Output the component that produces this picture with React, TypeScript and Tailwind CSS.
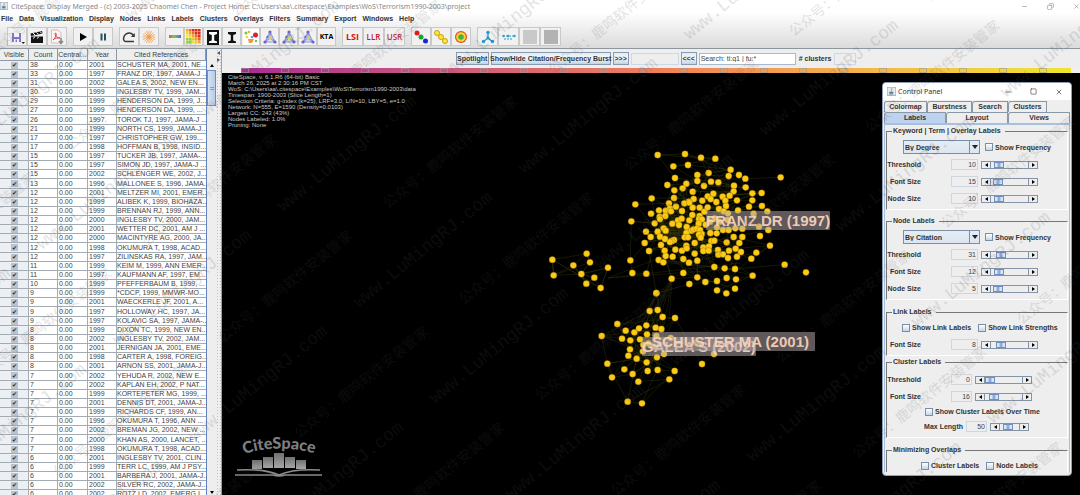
import { useId } from "react";
import type { ReactNode } from "react";
import { clsx } from "clsx";
import { Copy, Minus, Square, X } from "lucide-react";

type Point = [number, number];

const MENUS = [
  "File", "Data", "Visualization", "Display", "Nodes", "Links", "Labels",
  "Clusters", "Overlays", "Filters", "Summary", "Export", "Windows", "Help",
];

/* count, year, reference */
const REFERENCES: [number, number, string][] = [
  [38, 2001, "SCHUSTER MA, 2001, NE..."],
  [33, 1997, "FRANZ DR, 1997, JAMA-J ..."],
  [31, 2002, "GALEA S, 2002, NEW EN..."],
  [30, 1999, "INGLESBY TV, 1999, JAM..."],
  [29, 1999, "HENDERSON DA, 1999, J..."],
  [27, 1999, "HENDERSON DA, 1999, ..."],
  [26, 1997, "TOROK TJ, 1997, JAMA-J ..."],
  [21, 1999, "NORTH CS, 1999, JAMA-J..."],
  [17, 1997, "CHRISTOPHER GW, 199..."],
  [17, 1998, "HOFFMAN B, 1998, INSID..."],
  [15, 1997, "TUCKER JB, 1997, JAMA-..."],
  [15, 1997, "SIMON JD, 1997, JAMA-J ..."],
  [15, 2002, "SCHLENGER WE, 2002, J..."],
  [13, 1996, "MALLONEE S, 1996, JAMA..."],
  [12, 2001, "MELTZER MI, 2001, EMER..."],
  [12, 1999, "ALIBEK K, 1999, BIOHAZA..."],
  [12, 1999, "BRENNAN RJ, 1999, ANN..."],
  [12, 2000, "INGLESBY TV, 2000, JAM..."],
  [12, 2001, "WETTER DC, 2001, AM J ..."],
  [12, 2000, "MACINTYRE AG, 2000, JA..."],
  [12, 1998, "OKUMURA T, 1998, ACAD..."],
  [12, 1997, "ZILINSKAS RA, 1997, JAM..."],
  [11, 1999, "KEIM M, 1999, ANN EMER..."],
  [11, 1997, "KAUFMANN AF, 1997, EM..."],
  [10, 1999, "PFEFFERBAUM B, 1999, ..."],
  [9, 1999, "*CDCP, 1999, MMWR-MO..."],
  [9, 2001, "WAECKERLE JF, 2001, A..."],
  [9, 1997, "HOLLOWAY HC, 1997, JA..."],
  [9, 1997, "KOLAVIC SA, 1997, JAMA-..."],
  [8, 1999, "DIXON TC, 1999, NEW EN..."],
  [8, 2002, "INGLESBY TV, 2002, JAM..."],
  [8, 2001, "JERNIGAN JA, 2001, EME..."],
  [8, 1998, "CARTER A, 1998, FOREIG..."],
  [8, 2001, "ARNON SS, 2001, JAMA-J..."],
  [7, 2002, "YEHUDA R, 2002, NEW E..."],
  [7, 2002, "KAPLAN EH, 2002, P NAT..."],
  [7, 1999, "KORTEPETER MG, 1999, ..."],
  [7, 2001, "DENNIS DT, 2001, JAMA-J..."],
  [7, 1999, "RICHARDS CF, 1999, AN..."],
  [7, 1996, "OKUMURA T, 1996, ANN ..."],
  [7, 2002, "BREMAN JG, 2002, NEW ..."],
  [7, 2000, "KHAN AS, 2000, LANCET, ..."],
  [7, 1998, "OKUMURA T, 1998, ACAD..."],
  [6, 2001, "INGLESBY TV, 2001, CLIN..."],
  [6, 1999, "TERR LC, 1999, AM J PSY..."],
  [6, 2001, "BARBERA J, 2001, JAMA-J..."],
  [6, 2002, "SILVER RC, 2002, JAMA-J..."],
  [6, 2002, "ROTZ LD, 2002, EMERG I..."],
];

const RUN_INFO = [
  "CiteSpace, v. 6.1.R6 (64-bit) Basic",
  "March 26, 2025 at 2:30:16 PM CST",
  "WoS: C:\\Users\\aa\\.citespace\\Examples\\WoS\\Terrorism1990-2003\\data",
  "Timespan: 1900-2003 (Slice Length=1)",
  "Selection Criteria: g-index (k=25), LRF=3.0, L/N=10, LBY=5, e=1.0",
  "Network: N=555, E=1590 (Density=0.0103)",
  "Largest CC: 243 (43%)",
  "Nodes Labeled: 1.0%",
  "Pruning: None",
];

/* Node clusters, each on its own grid of three units per pixel. */
const CORE: Point[] = [
  [113, 15], [195, 12], [243, 23], [286, 26], [160, 49], [204, 45], [332, 59], [266, 69],
  [232, 75], [326, 78], [357, 75], [165, 84], [232, 93], [376, 86], [482, 82], [142, 105],
  [199, 101], [273, 95], [295, 97], [342, 107], [252, 108], [377, 112], [163, 121], [188, 115],
  [218, 125], [341, 124], [280, 131], [329, 137], [397, 130], [425, 129], [263, 139], [308, 140],
  [95, 145], [162, 144], [247, 152], [221, 147], [272, 147], [316, 152], [351, 151], [397, 151],
  [46, 163], [147, 160], [207, 155], [193, 160], [289, 156], [318, 168], [168, 170], [218, 173],
  [239, 173], [387, 170], [426, 168], [150, 175], [208, 158], [253, 185], [263, 172], [297, 177],
  [311, 184], [324, 190], [354, 181], [93, 191], [117, 181], [137, 182], [153, 184], [186, 183],
  [401, 191], [442, 184], [119, 200], [136, 198], [217, 195], [239, 198], [120, 207], [104, 220],
  [34, 214], [157, 221], [174, 211], [185, 206], [208, 211], [237, 207], [177, 225], [246, 208],
  [236, 221], [257, 224], [200, 231], [270, 215], [284, 205], [299, 215], [323, 210], [78, 245],
  [113, 245], [131, 235], [137, 242], [92, 261], [120, 260], [214, 242], [221, 238], [231, 236],
  [240, 240], [245, 252], [237, 254], [199, 249], [271, 249], [291, 232], [309, 240], [326, 240],
  [290, 250], [346, 235], [367, 236], [417, 230], [445, 240], [420, 258], [74, 279], [135, 267],
  [162, 270], [156, 273], [194, 262], [204, 262], [242, 263], [224, 279], [274, 273], [283, 272],
  [320, 277], [341, 261], [367, 261], [358, 279], [150, 276], [87, 303], [123, 285], [134, 302],
  [166, 299], [186, 302], [199, 287], [200, 295], [250, 292], [267, 289], [250, 303], [266, 302],
  [294, 300], [295, 314], [327, 302], [347, 296], [363, 306], [309, 313], [324, 324], [351, 320],
  [409, 308], [394, 326], [450, 287], [116, 330], [130, 337], [137, 318], [158, 320], [190, 327],
  [207, 338], [232, 332], [224, 311], [31, 331], [37, 369], [79, 371], [283, 351], [314, 355],
  [345, 357], [494, 344], [190, 369], [155, 386], [232, 382], [208, 402], [256, 396], [291, 393],
  [320, 384], [348, 388], [398, 377], [291, 421], [319, 430], [345, 416], [109, 430], [558, 367],
];

const WEST: Point[] = [
  [37, 359], [41, 406], [100, 376], [140, 341], [150, 367], [124, 402], [163, 413], [139, 431],
  [204, 383], [182, 444],
];

const SOUTH: Point[] = [
  [229, 39], [209, 93], [233, 90], [248, 111], [285, 114], [112, 132], [137, 152], [163, 157],
  [177, 145], [199, 136], [227, 143], [244, 147], [65, 168], [126, 176], [151, 181], [180, 178],
  [201, 163], [229, 168], [150, 208], [145, 227], [189, 214], [170, 236], [200, 247], [231, 232],
  [252, 222], [190, 195], [205, 190], [220, 200], [272, 174], [348, 188], [402, 222], [366, 252],
  [82, 251], [96, 292], [133, 268], [158, 282], [175, 305], [203, 273], [233, 270], [284, 273],
  [268, 298], [143, 365], [186, 370],
];

function Cluster({ nodes, transform }: { nodes: Point[]; transform: string }) {
  const hub = Math.floor(nodes.length / 2);
  return (
    <g transform={transform}>
      <g stroke="#9a9f1c" strokeWidth={1.5} opacity={0.3}>
        {nodes.map(([x, y], i) =>
          [i + 1, (i * 7 + 3) % nodes.length, i % 3 ? hub : (i + 11) % nodes.length].map((n, k) => {
            const to = nodes[n % nodes.length];
            const near = Math.hypot(to[0] - x, to[1] - y) < 190;
            return near && <line key={`${i}-${k}`} x1={x} y1={y} x2={to[0]} y2={to[1]} />;
          }),
        )}
      </g>
      {nodes.map(([x, y], i) => (
        <circle key={i} cx={x} cy={y} r={9.5} fill="#fecb14" stroke="#7a5f08" strokeWidth={1} />
      ))}
    </g>
  );
}

function NodeLabel({ x, y, width, text }: { x: number; y: number; width: number; text: string }) {
  return (
    <g>
      <rect x={x} y={y} width={width} height={19} rx={1} fill="#b7abae" opacity={0.52} />
      <text x={x} y={y + 15} fontSize={15} fontWeight={700} fill="#f8d4bb" opacity={0.93}>
        {text}
      </text>
    </g>
  );
}

/* The merged network; it opens on the top left corner of the canvas. */
function Network() {
  return (
    <svg className="absolute top-0 left-0 h-full w-full font-['Liberation_Sans',sans-serif]">
      <g stroke="#8a8f16" strokeWidth={0.5} opacity={0.3}>
        {[415, 420, 425, 428, 434, 440, 447].map((x, i) => (
          <line key={x} x1={450} y1={206} x2={x} y2={248 + (i % 3) * 8} />
        ))}
        <line x1={386} y1={205} x2={518} y2={190} />
        <line x1={386} y1={205} x2={512} y2={196} />
        <line x1={386} y1={205} x2={450} y2={180} />
      </g>
      <Cluster nodes={WEST} transform="translate(318 67) scale(0.3333)" />
      <Cluster nodes={CORE} transform="translate(398 77) scale(0.3333)" />
      <Cluster nodes={SOUTH} transform="translate(358 207) scale(0.3333)" />
      <NodeLabel x={484} y={138} width={124} text="FRANZ DR (1997)" />
      <NodeLabel x={420} y={264} width={114} text="GALEA S (2002)" />
      <NodeLabel x={430} y={259} width={163} text="SCHUSTER MA (2001)" />
    </svg>
  );
}

function CiteSpaceLogo() {
  return (
    <svg viewBox="0 0 88 40" className="absolute bottom-[18px] left-[13px] h-[40px] w-[88px]">
      <defs>
        <path id="logo-arc" d="M9 17 Q44 6 82 17" />
        <linearGradient id="logo-bar" x1="0" y1="0" x2="0" y2="1">
          <stop offset="0" stopColor="#707070" />
          <stop offset="1" stopColor="#a6a6a6" />
        </linearGradient>
      </defs>
      <text fontSize={16} fontWeight={900} fill="#7f7f7f" className="font-['Lato',sans-serif]">
        <textPath href="#logo-arc">CiteSpace</textPath>
      </text>
      <g fill="url(#logo-bar)">
        <rect x={17} y={23} width={10} height={9} />
        <rect x={28} y={20} width={10} height={11} />
        <rect x={39} y={16} width={10} height={15} />
        <rect x={50} y={20} width={10} height={11} />
        <rect x={61} y={23} width={10} height={9} />
      </g>
      <path
        d="M2 33 C20 32 35 34 44 38 C53 34 68 32 85 33 M0 38 H38 Q44 40 50 38 H87"
        fill="none"
        stroke="#8b8b8b"
        strokeWidth={1.6}
      />
    </svg>
  );
}

/* Diagonal site mark repeated over the whole window. */
function Watermark() {
  const marks: Point[] = [];
  for (let i = -6; i < 8; i++) {
    for (let j = -2; j < 5; j++) {
      const x = 283 + 76 * i + 241 * j;
      const y = 212 + 96 * i - 38 * j;
      if (x > -240 && x < 1080 && y > 0 && y < 605) marks.push([x, y]);
    }
  }
  return (
    <svg
      aria-hidden="true"
      className="pointer-events-none absolute inset-0 h-full w-full"
      fill="#505050"
      opacity={0.15}
    >
      {marks.map(([x, y]) => (
        <g key={`${x}-${y}`}>
          <text
            transform={`translate(${x} ${y}) rotate(-39)`}
            fontSize={18}
            className="font-['Liberation_Mono',monospace]"
          >
            www.LuMingRJ.com
          </text>
          <text
            transform={`translate(${x + 105} ${y - 3}) rotate(-39)`}
            fontSize={14}
            className="font-['Noto_Sans_CJK_SC',sans-serif]"
          >
            公众号：鹿鸣软件安装管家
          </text>
        </g>
      ))}
    </svg>
  );
}

function JavaIcon({ className }: { className?: string }) {
  return (
    <svg viewBox="0 0 16 16" className={className}>
      <rect x={0.5} y={0.5} width={15} height={15} fill="#e4ebf1" stroke="#8fa3b5" />
      <path d="M8 2 C11 4 6 5 8 8" fill="none" stroke="#e76f00" strokeWidth={1.5} />
      <path d="M4 9 H11 L10 12 H5 Z M3 14 H12" fill="#5382a1" stroke="#5382a1" />
    </svg>
  );
}

function TriangleIcon({ fill }: { fill: string }) {
  return (
    <svg viewBox="0 0 16 16" className="size-4">
      <path d="M8 3 L3 13 H13 Z M8 3 V9 L3 13 M8 9 L13 13" fill={fill} stroke="#8f9ad8" strokeWidth={1.2} />
      <g fill="#6d63c9">
        <circle cx={8} cy={3} r={1.6} />
        <circle cx={3} cy={13} r={1.6} />
        <circle cx={13} cy={13} r={1.6} />
        <circle cx={5.5} cy={8} r={1.2} />
      </g>
      <circle cx={8.5} cy={9} r={1.6} fill="#e2d23c" />
    </svg>
  );
}

function IBeam({ color }: { color: string }) {
  return <path d="M4 3 H12 V5 L9.200 6 V11.500 L12 12.500 V14 H4 V12.500 L6.800 11.500 V6 L4 5 Z" fill={color} />;
}

const HEAT = ["#f6ef3a", "#f7d52e", "#f5a623", "#ee6a1f", "#dd2b1c"];

const TOOL_GROUPS: { itemWidth: string; tools: { name: string; icon: ReactNode }[] }[] = [
  {
    itemWidth: "w-5",
    tools: [
      {
        name: "Save",
        icon: (
          <svg viewBox="0 0 16 16" className="size-4">
            <path d="M3 4 H12 V13 H3 Z" fill="#8377c4" />
            <path d="M5 4 H10 V8 H5 Z M5 10 H10 V13 H5 Z" fill="#f4f2ff" />
            <path d="M6.5 10.500 H8 V13 H6.500 Z" fill="#8377c4" />
            <path d="M12.500 13 H16 L14.200 15 Z" fill="#222" />
          </svg>
        ),
      },
      {
        name: "Movie",
        icon: (
          <svg viewBox="0 0 16 16" className="size-4">
            <path d="M2 7.500 H14 V14 H2 Z M1.500 4.500 L13 2 L13.600 4.500 L2 7 Z" fill="#151515" />
            <path d="M4 4 L6 6 M7.500 3.300 L9.500 5.300 M11 2.500 L12.800 4.500 M4 9.500 L6 7.700 M8 9.500 L10 7.700" stroke="#fff" />
          </svg>
        ),
      },
      {
        name: "PDF",
        icon: (
          <svg viewBox="0 0 16 16" className="size-4">
            <path d="M2.500 1 H9 L12 4 V14 H2.500 Z" fill="#fbf4f4" stroke="#d9b9b9" />
            <path d="M4 11 C7 9 8 4 6.500 4 C5 4 7 9 11 9 C8 8.500 5 9.500 4 11" fill="none" stroke="#d8434a" />
            <path d="M12 9 V14 M10 12 L12 14.500 L14 12" fill="none" stroke="#888" strokeWidth={1.5} />
          </svg>
        ),
      },
    ],
  },
  {
    itemWidth: "w-5",
    tools: [
      {
        name: "Start",
        icon: (
          <svg viewBox="0 0 16 16" className="size-4">
            <path d="M5 4 L12 8 L5 12 Z" fill="#000" />
          </svg>
        ),
      },
      {
        name: "Pause",
        icon: (
          <svg viewBox="0 0 16 16" className="size-4">
            <path d="M5.500 4.500 H7.500 V11.500 H5.500 Z M9 4.500 H11 V11.500 H9 Z" fill="#24545b" />
          </svg>
        ),
      },
    ],
  },
  {
    itemWidth: "w-5",
    tools: [
      {
        name: "Refresh",
        icon: (
          <svg viewBox="0 0 16 16" className="size-4">
            <path d="M13 12.500 H4.500 C1.500 12.500 1.500 5 8 4 C10 3.700 11.500 4.800 13 7" fill="none" stroke="#3a3a3a" strokeWidth={1.5} />
            <path d="M13.800 4 V8 H9.800 Z" fill="#3a3a3a" />
          </svg>
        ),
      },
      {
        name: "Burst",
        icon: (
          <svg viewBox="0 0 16 16" className="size-4">
            <path
              d="M8 1.500 V14.500 M1.500 8 H14.500 M3.500 3.500 L12.500 12.500 M12.500 3.500 L3.500 12.500 M5.500 2 L10.500 14 M14 5.500 L2 10.500 M10.500 2 L5.500 14 M2 5.500 L14 10.500"
              stroke="#eda25c"
              strokeWidth={0.8}
            />
            <circle cx={8} cy={8} r={2} fill="#f6a04d" />
          </svg>
        ),
      },
    ],
  },
  {
    itemWidth: "w-[19px]",
    tools: [
      {
        name: "Spectrum",
        icon: <span className="h-[3px] w-3 bg-linear-to-r from-[#e8483c] via-[#5fc85f] to-[#6a4be0]" />,
      },
      {
        name: "Heat map",
        icon: (
          <svg viewBox="0 0 15 15" className="size-[15px]">
            {HEAT.map((_, r) =>
              HEAT.map((_, c) => (
                <rect
                  key={`${r}-${c}`}
                  x={c * 3}
                  y={r * 3}
                  width={2.6}
                  height={2.6}
                  fill={r > 2 && c < 2 ? "#9ccf3c" : HEAT[Math.max(0, Math.min(4, c - r + 2))]}
                />
              )),
            )}
          </svg>
        ),
      },
      {
        name: "Label on dark",
        icon: (
          <svg viewBox="0 0 16 16" className="size-4">
            <path d="M2 1 H14 V16 H2 Z" fill="#111" />
            <IBeam color="#fff" />
          </svg>
        ),
      },
      {
        name: "Label on light",
        icon: (
          <svg viewBox="0 0 16 16" className="size-4">
            <IBeam color="#111" />
          </svg>
        ),
      },
      {
        name: "Colored clusters",
        icon: (
          <svg viewBox="0 0 16 16" className="size-4">
            <path d="M0 0 H16 V16 H0 Z" fill="#fff" />
            <circle cx={3} cy={4} r={1.500} fill="#7bc043" />
            <circle cx={6} cy={3} r={1.300} fill="#f0b429" />
            <circle cx={12.500} cy={6} r={2.500} fill="#e02020" />
            <circle cx={4} cy={8} r={1.300} fill="#f3d23b" />
            <circle cx={9} cy={8} r={1.300} fill="#54a7dd" />
            <path d="M5 10 H11 L9 14 H6 Z" fill="#ef9a33" />
            <circle cx={13} cy={12} r={1.200} fill="#66c266" />
          </svg>
        ),
      },
      { name: "Layout 1", icon: <TriangleIcon fill="#dfe4f8" /> },
      { name: "Layout 2", icon: <TriangleIcon fill="#d6ecd0" /> },
      { name: "Layout 3", icon: <TriangleIcon fill="#cfd9f6" /> },
      { name: "KTA", icon: <span className="font-['Open_Sans',sans-serif] text-[7px] font-bold text-black">KTA</span> },
    ],
  },
  {
    itemWidth: "w-[21px]",
    tools: [
      { name: "LSI", icon: <span className="font-['Open_Sans',sans-serif] text-[9px] font-bold text-[#e00f17]">LSI</span> },
      { name: "LLR", icon: <span className="font-['Open_Sans',sans-serif] text-[8px] font-semibold text-[#c0202c]">LLR</span> },
      { name: "USR", icon: <span className="font-['Open_Sans',sans-serif] text-[8px] font-semibold text-[#b8323c]">USR</span> },
    ],
  },
  {
    itemWidth: "w-5",
    tools: [
      {
        name: "Node colors",
        icon: (
          <svg viewBox="0 0 16 16" className="size-4">
            <circle cx={4} cy={4} r={2.500} fill="#e01c1c" />
            <circle cx={8} cy={8} r={2.500} fill="#19a52c" />
            <circle cx={12.500} cy={12} r={2.500} fill="#1c25d8" />
          </svg>
        ),
      },
      {
        name: "Uniform colors",
        icon: (
          <svg viewBox="0 0 16 16" className="size-4" fill="#fde93a" stroke="#c8a012">
            <circle cx={4} cy={4} r={2.500} />
            <circle cx={8} cy={8} r={2.500} />
            <circle cx={12} cy={12} r={2.500} />
          </svg>
        ),
      },
      {
        name: "Tree rings",
        icon: (
          <svg viewBox="0 0 16 16" className="size-4">
            <circle cx={8} cy={8} r={6} fill="#e8452a" />
            <circle cx={8} cy={8} r={4.800} fill="#f8dc2a" />
            <circle cx={8} cy={8} r={2.800} fill="#46b04a" />
          </svg>
        ),
      },
    ],
  },
  {
    itemWidth: "w-[21px]",
    tools: [
      {
        name: "Star network",
        icon: (
          <svg viewBox="0 0 16 16" className="size-4" fill="#1d9bd1">
            <path d="M8 4 V9 L3.500 12.500 M8 9 L12.500 12.500" fill="none" stroke="#1d9bd1" strokeWidth={1.200} />
            <circle cx={8} cy={3.500} r={1.700} />
            <circle cx={8} cy={9} r={1.500} />
            <circle cx={3.500} cy={12.500} r={1.700} />
            <circle cx={12.500} cy={12.500} r={1.700} />
          </svg>
        ),
      },
      {
        name: "Timeline",
        icon: (
          <svg viewBox="0 0 16 16" className="size-4" fill="#2f9fd0">
            <path d="M2 7 H14 M3 10 H12" stroke="#2f9fd0" strokeDasharray="2 1" />
            <circle cx={2.500} cy={7} r={1.200} />
            <circle cx={7} cy={7} r={1.200} />
            <circle cx={13.500} cy={7} r={1.200} />
          </svg>
        ),
      },
      { name: "Overlay", icon: <span className="size-[14px] bg-[#c9c9c9]" /> },
      { name: "Dual map", icon: <span className="size-[14px] bg-[#b2b2b2]" /> },
    ],
  },
];

function Toolbar() {
  return (
    <div className="flex items-center gap-[6px] border-b border-[#8e979e] py-[2px] pl-[7px]">
      {TOOL_GROUPS.map((group, i) => (
        <div key={i} className="flex">
          {group.tools.map((tool) => (
            <button
              key={tool.name}
              aria-label={tool.name}
              className={clsx(
                "flex h-[19px] items-center justify-center border border-[#c9c9c9] bg-[#f1f1f1]",
                group.itemWidth,
              )}
            >
              {tool.icon}
            </button>
          ))}
        </div>
      ))}
    </div>
  );
}

const HEAD_CELL = "h-[12px] border-r border-b border-[#8f9aa5] p-0 text-center font-normal";
const BODY_CELL = "border-r border-b border-[#a3abb3] p-0 pl-px leading-[8px] whitespace-nowrap";

function ReferenceTable() {
  return (
    <div className="min-w-0 flex-1 border-r border-[#6382bf]">
      <table className="w-full table-fixed border-separate border-spacing-0 text-[7px] text-[#3f3f3f]">
        <thead className="bg-[#eeeeee]">
          <tr>
            <th className={clsx(HEAD_CELL, "w-[29px]")}>Visible</th>
            <th className={clsx(HEAD_CELL, "w-[29px]")}>Count</th>
            <th className={clsx(HEAD_CELL, "w-[30px]")}>Central...</th>
            <th className={clsx(HEAD_CELL, "w-[29px]")}>Year</th>
            <th className={HEAD_CELL}>Cited References</th>
          </tr>
        </thead>
        <tbody>
          {REFERENCES.map(([count, year, reference], i) => (
            <tr key={i} className="h-[9px] bg-white nth-[7n]:h-[10px]">
              <td className="border-r border-b border-[#a3abb3] bg-[#eceff3] p-0">
                <input
                  type="checkbox"
                  defaultChecked
                  aria-label={`Show ${reference}`}
                  className="mx-auto -my-px flex h-[7px] w-[7px] appearance-none items-center justify-center bg-[#b9c3cf] text-[6px] leading-none text-[#222] checked:before:content-['✔']"
                />
              </td>
              <td className={BODY_CELL}>{count}</td>
              <td className={BODY_CELL}>0.00</td>
              <td className={BODY_CELL}>{year}</td>
              <td className="border-b border-[#a3abb3] p-0 leading-[8px] whitespace-nowrap">{reference}</td>
            </tr>
          ))}
        </tbody>
      </table>
    </div>
  );
}

function Sidebar() {
  return (
    <aside className="flex w-[222px] shrink-0 bg-[#eeeeee]">
      <ReferenceTable />
      <div className="flex w-[9px] flex-col bg-[#eeeeee] pt-[12px]">
        <button aria-label="Scroll up" className="flex h-[9px] items-center justify-center">
          <span className="border-x-2 border-b-3 border-x-transparent border-b-black" />
        </button>
        <div className="flex h-[36px] items-center justify-center border border-[#6f8fc4] bg-linear-to-r from-[#d5e3f2] to-[#b6cde6]">
          <span className="h-[3px] w-[4px] border-y border-[#7d9ccb]" />
        </div>
        <button aria-label="Scroll down" className="mt-auto flex h-[6px] items-center justify-center">
          <span className="border-x-2 border-t-3 border-x-transparent border-t-black" />
        </button>
      </div>
      <div className="flex w-[6px] flex-col items-center gap-[3px] border-r border-[#9aa3ab] bg-[radial-gradient(#c2c2c2_1px,transparent_1px)] bg-size-[3px_3px] pt-[2px]">
        <span className="border-y-2 border-r-3 border-y-transparent border-r-[#46618f]" />
        <span className="border-y-2 border-l-3 border-y-transparent border-l-[#46618f]" />
      </div>
    </aside>
  );
}

const METAL_BUTTON =
  "flex h-[13px] shrink-0 items-center justify-center border border-[#8a9bb0] bg-linear-to-b from-[#e3ebf3] via-[#f5f8fb] to-[#bfd2e6] font-bold whitespace-nowrap text-[#333]";

function SearchBar() {
  return (
    <div className="flex h-[19px] items-center justify-center gap-[2px] bg-[#eeeeee] pl-[10px] text-[7px]">
      <button className={clsx(METAL_BUTTON, "w-[33px]")}>Spotlight</button>
      <button className={clsx(METAL_BUTTON, "w-[120px]")}>Show/Hide Citation/Frequency Burst</button>
      <button className={clsx(METAL_BUTTON, "w-[16px]")}>&gt;&gt;&gt;</button>
      <input aria-label="Burst" disabled className="h-[12px] w-[48px] border border-[#cdd8e6] bg-[#eeeeee]" />
      <button className={clsx(METAL_BUTTON, "w-[16px]")}>&lt;&lt;&lt;</button>
      <input
        aria-label="Search"
        defaultValue="Search: ti:q1 | fu:*"
        className="h-[12px] w-[97px] border border-[#a9b8cc] bg-white px-px text-[#444]"
      />
      <label htmlFor="clusters" className="px-px font-bold text-[#333]"># clusters</label>
      <input id="clusters" disabled className="h-[12px] w-[22px] border border-[#cdd8e6] bg-[#eeeeee]" />
    </div>
  );
}

function ColorBar() {
  return (
    <div className="flex h-[5px] bg-[#f0f0f0] pr-[9px] pl-[19px]">
      <div className="flex flex-1 justify-between bg-linear-to-r from-[#a92a93] via-[#f07f58] to-[#efe62f] pr-[24px]">
        {Array.from({ length: 21 }, (_, i) => (
          <span key={i} className="h-full w-[8px] border border-[#99999999]" />
        ))}
      </div>
    </div>
  );
}

function Group({ title, className, children }: { title: string; className?: string; children: ReactNode }) {
  return (
    <fieldset
      className={clsx(
        "border border-t-[#777] border-r-white border-b-white border-l-[#777]",
        className,
      )}
    >
      <legend className="ml-[5px] px-px pr-[4px] leading-[8px]">{title}</legend>
      <div className="pt-[5px]">{children}</div>
    </fieldset>
  );
}

function CheckOption({ label }: { label: string }) {
  return (
    <label className="flex items-center gap-[2px] whitespace-nowrap">
      <input
        type="checkbox"
        className="size-[8px] appearance-none border border-[#7a8ea6] bg-linear-to-b from-white to-[#c3d5e8] checked:bg-[#6382bf]"
      />
      {label}
    </label>
  );
}

function ModeSelect({ label, value }: { label: string; value: string }) {
  return (
    <div className="ml-[16px] flex h-[14px] items-center gap-[5px]">
      <div className="relative h-[14px] w-[77px]">
        <select
          aria-label={label}
          className="h-full w-full appearance-none border border-[#7a8ea6] bg-linear-to-b from-[#e4ecf4] to-[#dde6f0] pl-[1px] font-bold"
        >
          <option>{value}</option>
        </select>
        <span className="pointer-events-none absolute inset-y-0 right-0 flex w-[11px] items-center justify-center border border-[#7a8ea6]">
          <span className="border-x-3 border-t-4 border-x-transparent border-t-[#222]" />
        </span>
      </div>
      <CheckOption label="Show Frequency" />
    </div>
  );
}

interface SliderRowProps {
  label: string;
  value: number;
  position: number;
  compact?: boolean;
  short?: boolean;
}

function SliderRow({ label, value, position, compact, short }: SliderRowProps) {
  const id = useId();
  return (
    <div className={clsx("flex h-[17px] items-center", short && "pl-[37px]")}>
      <label
        htmlFor={id}
        className={clsx("text-right whitespace-nowrap", short ? "mr-[3px] w-[39px]" : "mr-[30px] w-[34px]")}
      >
        {label}
      </label>
      <input
        id={id}
        defaultValue={value}
        className={clsx(
          "mr-[3px] h-[11px] border border-[#cfd6de] px-px text-right font-normal text-[#444]",
          compact ? "w-[21px]" : "w-[27px]",
        )}
      />
      <div className={clsx("flex h-[8px] border border-[#8493a6]", short ? "w-[39px]" : "w-[57px]")}>
        <button aria-label={`Decrease ${label}`} className="flex w-[8px] items-center justify-center">
          <span className="border-y-2 border-r-3 border-y-transparent border-r-black" />
        </button>
        <input
          type="range"
          aria-label={`${label} slider`}
          defaultValue={position}
          className="h-full min-w-0 flex-1 appearance-none border-x border-[#8493a6] [&::-webkit-slider-thumb]:h-[6px] [&::-webkit-slider-thumb]:w-[10px] [&::-webkit-slider-thumb]:appearance-none [&::-webkit-slider-thumb]:border [&::-webkit-slider-thumb]:border-[#6f8fc4] [&::-webkit-slider-thumb]:bg-[linear-gradient(90deg,#d9e6f5_2px,#8fabd6_3px,#8fabd6_5px,#d9e6f5_6px)]"
        />
        <button aria-label={`Increase ${label}`} className="flex w-[8px] items-center justify-center">
          <span className="border-y-2 border-l-3 border-y-transparent border-l-black" />
        </button>
      </div>
    </div>
  );
}

const TAB = "h-[11px] rounded-tl-[3px] border border-b-0 border-[#8a97a6] text-center leading-[10px]";

function ControlPanel() {
  return (
    <section className="absolute top-[9px] right-[8px] w-[190px] overflow-hidden rounded-[4px] border border-[#8ba0b8] bg-[#eeeeee] text-[7px] font-bold text-[#333]">
      <header className="flex h-[17px] items-center bg-white pr-[8px] pl-[4px] font-['Noto_Sans',sans-serif] font-normal text-[#333]">
        <JavaIcon className="mr-[2px] size-[9px]" />
        Control Panel
        <div className="ml-auto flex items-center gap-[18px]">
          <button aria-label="Minimize"><Minus size={8} /></button>
          <button aria-label="Maximize"><Square size={7} /></button>
          <button aria-label="Close"><X size={8} /></button>
        </div>
      </header>

      <div className="px-px pt-px pb-[2px]">
        <div className="flex">
          <button className={clsx(TAB, "w-[43px]")}>Colormap</button>
          <button className={clsx(TAB, "w-[45px]")}>Burstness</button>
          <button className={clsx(TAB, "w-[36px]")}>Search</button>
          <button className={clsx(TAB, "w-[39px]")}>Clusters</button>
        </div>
        <div className="grid grid-cols-3">
          <button className={clsx(TAB, "bg-[#bdd2ee]")}>Labels</button>
          <button className={TAB}>Layout</button>
          <button className={TAB}>Views</button>
        </div>

        <div className="border border-t-2 border-[#a9c0dd] border-b-transparent px-px pt-[2px]">
          <Group title="Keyword | Term | Overlay Labels">
            <ModeSelect label="Keyword label mode" value="By Degree" />
            <div className="py-[2px]">
              <SliderRow label="Threshold" value={10} position={10} />
              <SliderRow label="Font Size" value={15} position={8} />
              <SliderRow label="Node Size" value={10} position={10} />
            </div>
          </Group>
          <Group title="Node Labels" className="mt-[7px]">
            <ModeSelect label="Node label mode" value="By Citation" />
            <div className="py-[2px]">
              <SliderRow label="Threshold" value={31} position={18} />
              <SliderRow label="Font Size" value={12} position={10} />
              <SliderRow label="Node Size" value={5} position={7} />
            </div>
          </Group>
          <Group title="Link Labels" className="mt-[8px]">
            <div className="ml-[15px] flex h-[13px] items-center gap-[7px]">
              <CheckOption label="Show Link Labels" />
              <CheckOption label="Show Link Strengths" />
            </div>
            <div className="py-[2px]">
              <SliderRow label="Font Size" value={8} position={18} />
            </div>
          </Group>
          <Group title="Cluster Labels" className="mt-[2px]">
            <SliderRow label="Threshold" value={0} position={0} compact />
            <SliderRow label="Font Size" value={16} position={15} compact />
            <div className="ml-[38px] flex h-[13px] items-center">
              <CheckOption label="Show Cluster Labels Over Time" />
            </div>
            <div className="pb-[2px]">
              <SliderRow label="Max Length" value={50} position={35} compact short />
            </div>
          </Group>
          <Group title="Minimizing Overlaps" className="mt-[8px] border-b-0">
            <div className="ml-[34px] flex h-[13px] items-center gap-[7px]">
              <CheckOption label="Cluster Labels" />
              <CheckOption label="Node Labels" />
            </div>
          </Group>
        </div>
      </div>
    </section>
  );
}

export default function App() {
  return (
    <div className="relative flex h-screen flex-col overflow-hidden bg-[#eeeeee] font-['Liberation_Sans','Noto_Sans_CJK_SC',sans-serif] leading-none">
      <div className="bg-linear-to-b from-white from-25% to-[#dadada]">
        <header className="flex h-[12px] items-center font-['Noto_Sans',sans-serif] text-[7px] text-[#888]">
          <JavaIcon className="mr-[3px] size-[8px]" />
          <h1 className="whitespace-nowrap">
            CiteSpace: Display Merged - (c) 2003-2025 Chaomei Chen - Project Home:
            C:\Users\aa\.citespace\Examples\WoS\Terrorism1990-2003\project
          </h1>
          <div className="ml-auto flex items-center gap-[19px]">
            <button aria-label="Minimize"><Minus size={7} /></button>
            <button aria-label="Restore"><Copy size={7} className="-scale-x-100" /></button>
            <button aria-label="Close"><X size={7} /></button>
          </div>
        </header>
        <nav className="flex h-[13px] items-center gap-[6px] pl-px text-[7px] font-bold text-[#333]">
          {MENUS.map((menu) => (
            <button key={menu}>{menu}</button>
          ))}
        </nav>
        <Toolbar />
      </div>

      <div className="flex min-h-0 flex-1">
        <Sidebar />
        <main className="flex min-w-0 flex-1 flex-col">
          <SearchBar />
          <ColorBar />
          <div className="relative flex-1 bg-black">
            <div className="pt-px pl-[6px] text-[6px] leading-[6px] text-[#c8c8c8]">
              {RUN_INFO.map((line) => (
                <p key={line}>{line}</p>
              ))}
            </div>
            <Network />
            <CiteSpaceLogo />
            <ControlPanel />
          </div>
        </main>
      </div>

      <Watermark />
    </div>
  );
}
